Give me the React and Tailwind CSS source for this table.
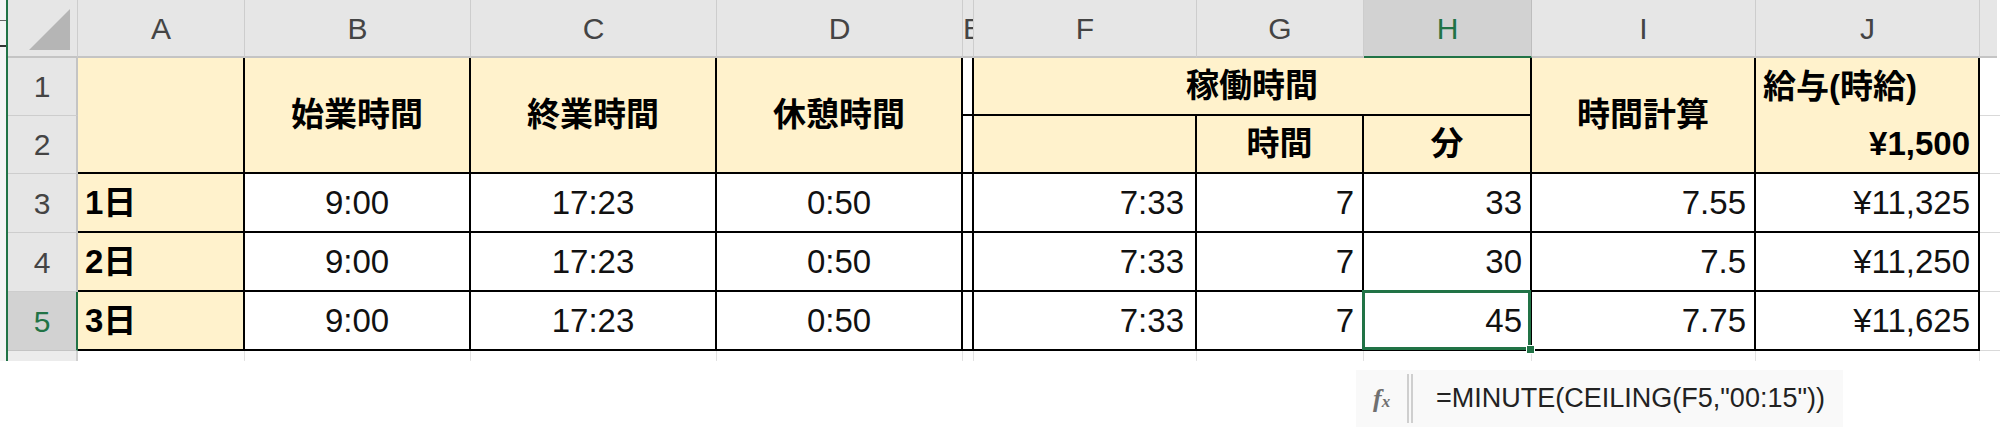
import React from "react";

const days = [
  { day: "1日", start: "9:00", end: "17:23", rest: "0:50", work: "7:33", h: "7", m: "33", calc: "7.55", pay: "¥11,325" },
  { day: "2日", start: "9:00", end: "17:23", rest: "0:50", work: "7:33", h: "7", m: "30", calc: "7.5", pay: "¥11,250" },
  { day: "3日", start: "9:00", end: "17:23", rest: "0:50", work: "7:33", h: "7", m: "45", calc: "7.75", pay: "¥11,625" },
];

const rowStarts = ["row-start-4", "row-start-5", "row-start-6"];

const hdr = "bg-[#e6e6e6] border-r border-b-2 border-r-[#cdcdcd] border-b-[#c4c4c4] flex items-center justify-center text-[30px] text-[#444]";
const rowHdr = "col-start-2 bg-[#e6e6e6] border-r-2 border-b border-r-[#c4c4c4] border-b-[#cdcdcd] flex items-center justify-center text-[30px] text-[#444]";
const cell = "border-r-2 border-b-2 border-black flex items-center text-[33px] text-[#111]";
const yellow = "bg-[#fff2cc]";
const gap = "col-start-13 border-b border-[#d9d9d9]";

export default function App() {
  return (
    <div className="w-[2000px] h-[434px] bg-white overflow-hidden font-['Liberation_Sans','Noto_Sans_CJK_JP',sans-serif]">
      <div className="grid grid-cols-[8px_70px_167px_226px_246px_246px_11px_223px_167px_168px_224px_224px_1fr] grid-rows-[58px_58px_58px_59px_59px_59px_10px]">
        {/* left edge */}
        <div className="col-start-1 row-start-1 row-span-7 bg-[#f4f4f4] border-r-2 border-[#217346] flex flex-col">
          <div className="mt-[20px] h-px w-[6px] bg-[#666]" />
          <div className="mt-[24px] h-[2px] w-[6px] bg-[#333]" />
        </div>

        {/* column headers */}
        <div className={`col-start-2 row-start-1 ${hdr} items-end justify-end pr-[6px] pb-[5px]`}>
          <svg width="42" height="42" viewBox="0 0 42 42">
            <polygon points="0,41 41,41 41,0" fill="#b5b5b5" />
          </svg>
        </div>
        <div className={`col-start-3 row-start-1 ${hdr}`}>A</div>
        <div className={`col-start-4 row-start-1 ${hdr}`}>B</div>
        <div className={`col-start-5 row-start-1 ${hdr}`}>C</div>
        <div className={`col-start-6 row-start-1 ${hdr}`}>D</div>
        <div className={`col-start-7 row-start-1 ${hdr} overflow-hidden justify-start text-[24px]`}>E</div>
        <div className={`col-start-8 row-start-1 ${hdr}`}>F</div>
        <div className={`col-start-9 row-start-1 ${hdr}`}>G</div>
        <div className="col-start-10 row-start-1 bg-[#d2d2d2] border-r border-b-2 border-r-[#bdbdbd] border-b-[#217346] flex items-center justify-center text-[30px] text-[#217346]">H</div>
        <div className={`col-start-11 row-start-1 ${hdr}`}>I</div>
        <div className={`col-start-12 row-start-1 ${hdr}`}>J</div>
        <div className="col-start-13 row-start-1 flex">
          <div className="w-[17px] bg-[#e6e6e6] border-b-2 border-[#c4c4c4]" />
        </div>

        {/* row headers */}
        <div className={`row-start-2 ${rowHdr}`}>1</div>
        <div className={`row-start-3 ${rowHdr}`}>2</div>
        <div className={`row-start-4 ${rowHdr}`}>3</div>
        <div className={`row-start-5 ${rowHdr}`}>4</div>
        <div className="col-start-2 row-start-6 bg-[#d2d2d2] border-r-2 border-b border-r-[#217346] border-b-[#c4c4c4] flex items-center justify-center text-[30px] text-[#217346]">5</div>
        <div className="col-start-2 row-start-7 bg-[#ececec] border-r-2 border-[#d0d0d0]" />

        {/* header block rows 1-2 */}
        <div className={`col-start-3 row-start-2 row-span-2 ${cell} ${yellow}`} />
        <div className={`col-start-4 row-start-2 row-span-2 ${cell} ${yellow} justify-center font-bold text-black`}>始業時間</div>
        <div className={`col-start-5 row-start-2 row-span-2 ${cell} ${yellow} justify-center font-bold text-black`}>終業時間</div>
        <div className={`col-start-6 row-start-2 row-span-2 ${cell} ${yellow} justify-center font-bold text-black`}>休憩時間</div>
        <div className={`col-start-7 row-start-2 ${cell} bg-white`} />
        <div className={`col-start-7 row-start-3 ${cell} bg-white`} />
        <div className={`col-start-8 col-span-3 row-start-2 ${cell} ${yellow} justify-center font-bold text-black`}>稼働時間</div>
        <div className={`col-start-8 row-start-3 ${cell} ${yellow}`} />
        <div className={`col-start-9 row-start-3 ${cell} ${yellow} justify-center font-bold text-black`}>時間</div>
        <div className={`col-start-10 row-start-3 ${cell} ${yellow} justify-center font-bold text-black`}>分</div>
        <div className={`col-start-11 row-start-2 row-span-2 ${cell} ${yellow} justify-center font-bold text-black`}>時間計算</div>
        <div className={`col-start-12 row-start-2 border-r-2 border-black flex items-center ${yellow} pl-[7px] text-[33px] font-bold text-black`}>給与(時給)</div>
        <div className={`col-start-12 row-start-3 ${cell} ${yellow} justify-end pr-[8px] font-bold text-black`}>¥1,500</div>
        <div className={`row-start-2 ${gap}`} />
        <div className={`row-start-3 ${gap}`} />

        {/* data rows */}
        {days.map((d, i) => (
          <React.Fragment key={d.day}>
            <div className={`col-start-3 ${rowStarts[i]} ${cell} ${yellow} pl-[7px] font-bold text-black`}>{d.day}</div>
            <div className={`col-start-4 ${rowStarts[i]} ${cell} justify-center`}>{d.start}</div>
            <div className={`col-start-5 ${rowStarts[i]} ${cell} justify-center`}>{d.end}</div>
            <div className={`col-start-6 ${rowStarts[i]} ${cell} justify-center`}>{d.rest}</div>
            <div className={`col-start-7 ${rowStarts[i]} ${cell}`} />
            <div className={`col-start-8 ${rowStarts[i]} ${cell} justify-end pr-[11px]`}>{d.work}</div>
            <div className={`col-start-9 ${rowStarts[i]} ${cell} justify-end pr-[8px]`}>{d.h}</div>
            <div className={`col-start-10 ${rowStarts[i]} ${cell} justify-end pr-[8px] relative`}>
              {d.m}
              {i === 2 && (
                <>
                  <div className="absolute -left-[2px] -top-[2px] right-[-1px] bottom-[-1px] border-[3px] border-[#217346]" />
                  <div className="absolute -right-[5px] -bottom-[5px] w-[9px] h-[9px] bg-[#217346] border border-white" />
                </>
              )}
            </div>
            <div className={`col-start-11 ${rowStarts[i]} ${cell} justify-end pr-[8px]`}>{d.calc}</div>
            <div className={`col-start-12 ${rowStarts[i]} ${cell} justify-end pr-[8px]`}>{d.pay}</div>
            <div className={`${rowStarts[i]} ${gap}`} />
          </React.Fragment>
        ))}

        {/* partial next row */}
        <div className="col-start-3 row-start-7 border-r border-[#e2e2e2]" />
        <div className="col-start-4 row-start-7 border-r border-[#e2e2e2]" />
        <div className="col-start-5 row-start-7 border-r border-[#e2e2e2]" />
        <div className="col-start-6 row-start-7 border-r border-[#e2e2e2]" />
        <div className="col-start-7 row-start-7 border-r border-[#e2e2e2]" />
        <div className="col-start-8 row-start-7 border-r border-[#e2e2e2]" />
        <div className="col-start-9 row-start-7 border-r border-[#e2e2e2]" />
        <div className="col-start-10 row-start-7 border-r border-[#e2e2e2]" />
        <div className="col-start-11 row-start-7 border-r border-[#e2e2e2]" />
        <div className="col-start-12 row-start-7 border-r border-[#e2e2e2]" />
      </div>

      {/* formula bar */}
      <div className="ml-[1356px] mt-[9px] w-[487px] h-[57px] bg-[#f9f9f9] flex items-center">
        <span className="ml-[17px] w-[26px] font-['Liberation_Serif',serif] italic font-bold text-[26px] text-[#707070] leading-none">
          f<span className="text-[17px]">x</span>
        </span>
        <div className="ml-[8px] h-[49px] flex gap-[2px]">
          <div className="w-[2px] h-full bg-[#cfcfcf]" />
          <div className="w-[2px] h-full bg-[#cfcfcf]" />
        </div>
        <span className="ml-[23px] text-[27px] text-[#222] whitespace-nowrap">=MINUTE(CEILING(F5,"00:15"))</span>
      </div>
    </div>
  );
}
